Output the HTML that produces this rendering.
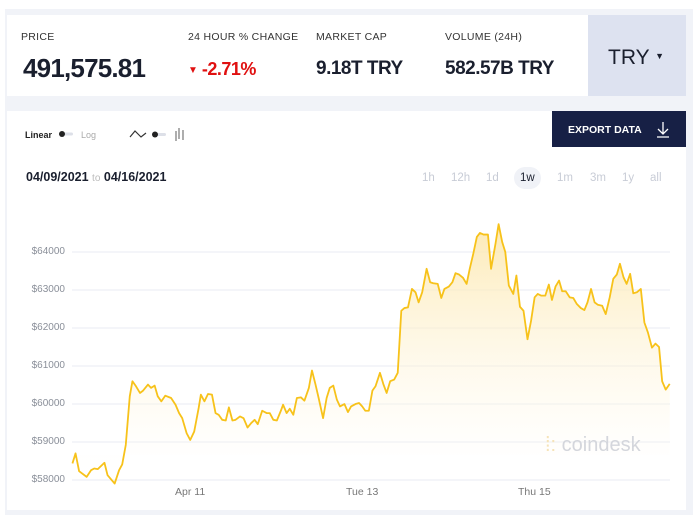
<!DOCTYPE html>
<html><head><meta charset="utf-8"><style>
*{margin:0;padding:0;box-sizing:border-box}
body{width:693px;height:515px;background:#fff;font-family:"Liberation Sans",sans-serif;position:relative;overflow:hidden}
.bg{position:absolute;left:5px;top:9px;width:688px;height:506px;background:#f1f3f8}
.card{position:absolute;background:#fff}
.t{position:absolute;white-space:nowrap}
.lab{font-size:10.5px;color:#333;letter-spacing:.3px;top:31px}
.val{font-size:19px;font-weight:bold;color:#1a1f2e;top:58px;letter-spacing:-.5px}
.yl{position:absolute;left:0;width:65px;text-align:right;font-size:10px;color:#8a8f99}
.xl{position:absolute;top:486px;font-size:10.5px;color:#777}
.rng{position:absolute;top:172px;font-size:11.5px;color:#c8ccd6}
</style></head><body>
<div class="bg"></div>
<div class="card" style="left:7px;top:15px;width:581px;height:81px"></div>
<div class="card" style="left:588px;top:15px;width:98px;height:81px;background:#dde2f0"></div>
<div class="t lab" style="left:21px">PRICE</div>
<div class="t lab" style="left:188px">24 HOUR % CHANGE</div>
<div class="t lab" style="left:316px">MARKET CAP</div>
<div class="t lab" style="left:445px">VOLUME (24H)</div>
<div class="t" style="left:23px;top:53px;font-size:26px;font-weight:bold;color:#1a1f2e;letter-spacing:-.8px">491,575.81</div>
<div class="t" style="left:188px;top:59px;font-size:18px;font-weight:bold;color:#e01010;letter-spacing:-.5px"><span style="font-size:10px;vertical-align:2px">▼</span> -2.71%</div>
<div class="t val" style="left:316px">9.18T TRY</div>
<div class="t val" style="left:445px">582.57B TRY</div>
<div class="t" style="left:608px;top:46px;font-size:21px;color:#1a1f2e">TRY <span style="font-size:9px;vertical-align:5px">▼</span></div>

<div class="card" style="left:7px;top:111px;width:679px;height:399px"></div>
<div class="card" style="left:552px;top:111px;width:134px;height:36px;background:#172045"></div>
<div class="t" style="left:568px;top:124px;font-size:10.5px;font-weight:bold;color:#fff">EXPORT DATA</div>
<svg style="position:absolute;left:655px;top:120px" width="16" height="18"><path d="M8 2V14M3 9L8 14L13 9M2 17H14" stroke="#fff" stroke-width="1.3" fill="none"/></svg>
<div class="t" style="left:25px;top:130px;font-size:9px;font-weight:bold;color:#222">Linear</div>
<svg style="position:absolute;left:58px;top:130px" width="20" height="8"><rect x="3" y="2.5" width="12" height="3" rx="1.5" fill="#dde0e8"/><circle cx="4" cy="4" r="3" fill="#222"/></svg>
<div class="t" style="left:81px;top:130px;font-size:9px;color:#aaa">Log</div>
<svg style="position:absolute;left:128px;top:126px" width="62" height="16"><path d="M2 11L7 5L13 11L18 7" stroke="#333" stroke-width="1.2" fill="none"/><rect x="26" y="7" width="12" height="3" rx="1.5" fill="#dde0e8"/><circle cx="27" cy="8.5" r="3" fill="#222"/><path d="M48 5V15M51 2V13M55 4V14" stroke="#999" stroke-width="1.6"/></svg>
<div class="t" style="left:26px;top:170px;font-size:12.5px;font-weight:bold;color:#1a1f2e">04/09/2021 <span style="font-weight:normal;color:#bbb;font-size:10px">to</span> 04/16/2021</div>
<div class="rng" style="left:422px">1h</div>
<div class="rng" style="left:451px">12h</div>
<div class="rng" style="left:486px">1d</div>
<div style="position:absolute;left:514px;top:167px;width:27px;height:22px;border-radius:11px;background:#f0f2f7"></div>
<div class="rng" style="left:520px;color:#1a1f2e">1w</div>
<div class="rng" style="left:557px">1m</div>
<div class="rng" style="left:590px">3m</div>
<div class="rng" style="left:622px">1y</div>
<div class="rng" style="left:650px">all</div>

<svg style="position:absolute;left:0;top:0" width="693" height="515">
<defs><linearGradient id="g" x1="0" y1="0" x2="0" y2="1"><stop offset="0" stop-color="#fce7ad" stop-opacity=".9"/><stop offset=".75" stop-color="#fff8e6" stop-opacity=".3"/><stop offset="1" stop-color="#fff" stop-opacity="0"/></linearGradient></defs>
<g stroke="#e8ebf3" stroke-width="1">
<line x1="72" x2="670" y1="252" y2="252"/><line x1="72" x2="670" y1="290" y2="290"/><line x1="72" x2="670" y1="328" y2="328"/><line x1="72" x2="670" y1="366" y2="366"/><line x1="72" x2="670" y1="404" y2="404"/><line x1="72" x2="670" y1="442" y2="442"/><line x1="72" x2="670" y1="480" y2="480"/></g>
<g transform="translate(0,200) scale(0.4444,0.3356)">
<path fill="url(#g)" stroke="none" d="M163,785L170,755L178,808L195,825L205,805L212,800L220,802L235,783L242,820L258,845L268,805L275,788L283,730L292,585L298,540L305,553L315,575L322,568L333,550L340,560L348,553L355,585L363,600L372,583L385,590L395,610L403,635L410,650L420,695L428,715L437,690L447,620L452,580L460,600L468,578L477,580L485,635L492,640L500,655L508,657L515,618L523,657L530,655L540,645L548,650L557,678L565,665L573,655L580,668L590,628L600,635L607,635L615,655L623,657L632,628L637,610L645,635L652,622L660,640L668,590L677,588L685,598L695,560L702,508L710,550L717,590L727,650L735,590L742,560L750,553L758,595L765,615L775,608L783,632L790,615L800,608L808,605L815,615L822,628L830,628L838,568L845,555L855,515L863,550L870,575L878,540L887,535L895,515L903,330L910,322L918,320L927,265L935,275L942,305L950,275L960,205L968,245L975,248L985,250L993,292L1000,265L1010,258L1018,245L1025,218L1033,222L1042,232L1050,250L1057,205L1065,160L1073,110L1080,98L1088,103L1098,103L1105,205L1115,130L1122,72L1130,125L1137,155L1145,255L1155,280L1162,225L1170,318L1178,330L1187,415L1195,360L1203,290L1210,280L1218,285L1227,285L1235,252L1242,298L1250,258L1258,240L1265,272L1273,272L1282,290L1290,292L1298,310L1307,322L1315,328L1322,305L1330,265L1338,305L1345,312L1355,315L1363,340L1372,290L1380,235L1388,222L1395,190L1403,230L1410,250L1418,220L1425,278L1433,275L1442,265L1450,365L1458,395L1467,440L1475,428L1483,438L1490,540L1498,565L1507,548L1507,760L163,760Z"/>
</g>
<text x="545" y="451" font-family="Liberation Sans,sans-serif" font-size="20" fill="#d4d6dc"><tspan fill="#f6e3b8">⁞:</tspan> coindesk</text>
<g transform="translate(0,200) scale(0.4444,0.3356)">
<path fill="none" stroke="#f7c21a" stroke-width="1.8" vector-effect="non-scaling-stroke" stroke-linejoin="round" d="M163,785L170,755L178,808L195,825L205,805L212,800L220,802L235,783L242,820L258,845L268,805L275,788L283,730L292,585L298,540L305,553L315,575L322,568L333,550L340,560L348,553L355,585L363,600L372,583L385,590L395,610L403,635L410,650L420,695L428,715L437,690L447,620L452,580L460,600L468,578L477,580L485,635L492,640L500,655L508,657L515,618L523,657L530,655L540,645L548,650L557,678L565,665L573,655L580,668L590,628L600,635L607,635L615,655L623,657L632,628L637,610L645,635L652,622L660,640L668,590L677,588L685,598L695,560L702,508L710,550L717,590L727,650L735,590L742,560L750,553L758,595L765,615L775,608L783,632L790,615L800,608L808,605L815,615L822,628L830,628L838,568L845,555L855,515L863,550L870,575L878,540L887,535L895,515L903,330L910,322L918,320L927,265L935,275L942,305L950,275L960,205L968,245L975,248L985,250L993,292L1000,265L1010,258L1018,245L1025,218L1033,222L1042,232L1050,250L1057,205L1065,160L1073,110L1080,98L1088,103L1098,103L1105,205L1115,130L1122,72L1130,125L1137,155L1145,255L1155,280L1162,225L1170,318L1178,330L1187,415L1195,360L1203,290L1210,280L1218,285L1227,285L1235,252L1242,298L1250,258L1258,240L1265,272L1273,272L1282,290L1290,292L1298,310L1307,322L1315,328L1322,305L1330,265L1338,305L1345,312L1355,315L1363,340L1372,290L1380,235L1388,222L1395,190L1403,230L1410,250L1418,220L1425,278L1433,275L1442,265L1450,365L1458,395L1467,440L1475,428L1483,438L1490,540L1498,565L1507,548"/>
</g>
</svg>
<div class="yl" style="top:246px">$64000</div>
<div class="yl" style="top:284px">$63000</div>
<div class="yl" style="top:322px">$62000</div>
<div class="yl" style="top:360px">$61000</div>
<div class="yl" style="top:398px">$60000</div>
<div class="yl" style="top:436px">$59000</div>
<div class="yl" style="top:474px">$58000</div>
<div class="xl" style="left:175px">Apr 11</div>
<div class="xl" style="left:346px">Tue 13</div>
<div class="xl" style="left:518px">Thu 15</div>
</body></html>
